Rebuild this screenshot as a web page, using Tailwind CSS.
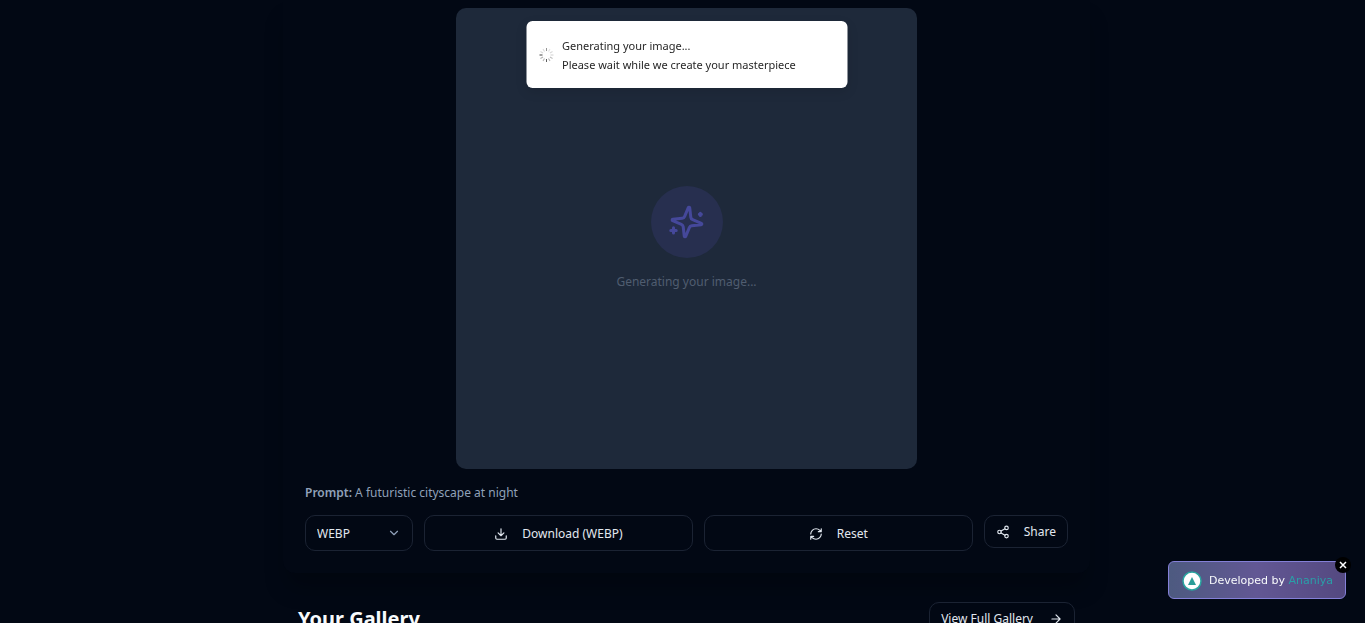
<!DOCTYPE html>
<html lang="en">
<head>
<meta charset="utf-8">
<meta name="viewport" content="width=device-width, initial-scale=1">
<title>Image Generator</title>
<script src="https://cdn.jsdelivr.net/npm/@tailwindcss/browser@4"></script>
</head>
<body class="h-screen overflow-hidden bg-[#020814] pl-2 font-['Noto_Sans',sans-serif] text-[12px] leading-5 text-slate-200">
<main class="mx-auto w-full max-w-[807px]">
  <section class="rounded-b-xl bg-[#020814] px-[22px] pt-2 pb-[22px] shadow-[0_18px_22px_-4px_rgba(0,0,0,0.25)]">
    <div class="mx-auto flex aspect-square w-full max-w-[461px] flex-col items-center justify-center rounded-[10px] bg-[#1e293a]">
      <div class="flex size-[72px] items-center justify-center rounded-full bg-[#272f4f]">
        <svg class="size-9 text-[#45489a]" viewBox="0 0 24 24" fill="none" stroke="currentColor" stroke-width="2" stroke-linecap="round" stroke-linejoin="round" aria-hidden="true"><path transform="rotate(8 12 12)" d="M9.937 15.5A2 2 0 0 0 8.5 14.063l-6.135-1.582a.5.5 0 0 1 0-.962L8.5 9.936A2 2 0 0 0 9.937 8.5l1.582-6.135a.5.5 0 0 1 .963 0L14.063 8.5A2 2 0 0 0 15.5 9.937l6.135 1.581a.5.5 0 0 1 0 .964L15.5 14.063a2 2 0 0 0-1.437 1.437l-1.582 6.135a.5.5 0 0 1-.963 0z"/><path d="M20.900 6.200v1.400M20.200 6.900h1.400M3 15.800v3.600M1.200 17.600h3.600"/></svg>
      </div>
      <p class="mt-[14px] text-[#505d70]">Generating your image...</p>
    </div>
    <p class="mt-[14px] text-slate-400"><span class="font-semibold">Prompt:</span> A futuristic cityscape at night</p>
    <div class="mt-3 flex items-start gap-[11px]">
      <div class="relative w-[108px]">
        <select aria-label="Image format" class="h-9 w-full appearance-none rounded-[10px] border border-[#1b2333] bg-transparent px-[11px] pt-px"><option>WEBP</option></select>
        <svg class="pointer-events-none absolute top-[11px] right-3 size-[14px] text-slate-400" viewBox="0 0 24 24" fill="none" stroke="currentColor" stroke-width="2" stroke-linecap="round" stroke-linejoin="round" aria-hidden="true"><path d="m6 9 6 6 6-6"/></svg>
      </div>
      <button class="flex h-9 flex-1 items-center justify-center gap-[14px] rounded-[10px] border border-[#1b2333] pt-px">
        <svg class="size-[14px]" viewBox="0 0 24 24" fill="none" stroke="currentColor" stroke-width="2" stroke-linecap="round" stroke-linejoin="round" aria-hidden="true"><path d="M21 15v4a2 2 0 0 1-2 2H5a2 2 0 0 1-2-2v-4M7 10l5 5 5-5M12 15V3"/></svg>
        Download (WEBP)
      </button>
      <button class="flex h-9 flex-1 items-center justify-center gap-[14px] rounded-[10px] border border-[#1b2333] pt-px">
        <svg class="size-[14px]" viewBox="0 0 24 24" fill="none" stroke="currentColor" stroke-width="2" stroke-linecap="round" stroke-linejoin="round" aria-hidden="true"><path d="M3 12a9 9 0 0 1 9-9 9.750 9.750 0 0 1 6.740 2.740L21 8M21 3v5h-5M21 12a9 9 0 0 1-9 9 9.750 9.750 0 0 1-6.740-2.740L3 16M8 16H3v5"/></svg>
        Reset
      </button>
      <button class="flex h-[33px] items-center gap-[14px] rounded-[10px] border border-[#1b2333] px-[11px] pt-px">
        <svg class="size-[14px]" viewBox="0 0 24 24" fill="none" stroke="currentColor" stroke-width="2" stroke-linecap="round" stroke-linejoin="round" aria-hidden="true"><circle cx="18" cy="5" r="3"/><circle cx="6" cy="12" r="3"/><circle cx="18" cy="19" r="3"/><path d="m8.590 13.510 6.830 3.980M15.410 6.510l-6.820 3.980"/></svg>
        Share
      </button>
    </div>
  </section>
  <section class="mt-[29px] flex items-start justify-between px-[15px]">
    <h2 class="mt-[3px] text-[20px] leading-7 font-bold text-slate-50">Your Gallery</h2>
    <a href="#gallery" class="flex h-[33px] items-center gap-4 rounded-[10px] border border-[#1b2333] px-[11px]">View Full Gallery
      <svg class="size-[14px]" viewBox="0 0 24 24" fill="none" stroke="currentColor" stroke-width="2" stroke-linecap="round" stroke-linejoin="round" aria-hidden="true"><path d="M5 12h14M12 5l7 7-7 7"/></svg>
    </a>
  </section>
</main>

<div role="status" class="fixed top-[21px] left-1/2 ml-1 flex h-[67px] w-[321px] -translate-x-1/2 items-center gap-2 rounded-md bg-white px-3 text-[11px] leading-[19px] text-[#262626] shadow-[0_4px_12px_rgba(0,0,0,0.1)]">
  <svg class="size-4 text-neutral-700" viewBox="0 0 16 16" stroke="currentColor" stroke-width="1" aria-hidden="true">
    <path d="M8 4V1" opacity=".55"/>
    <path d="M8 4V1" transform="rotate(30 8 8)" opacity=".15"/>
    <path d="M8 4V1" transform="rotate(60 8 8)" opacity=".2"/>
    <path d="M8 4V1" transform="rotate(90 8 8)" opacity=".25"/>
    <path d="M8 4V1" transform="rotate(120 8 8)" opacity=".35"/>
    <path d="M8 4V1" transform="rotate(150 8 8)" opacity=".4"/>
    <path d="M8 4V1" transform="rotate(180 8 8)" opacity=".85"/>
    <path d="M8 4V1" transform="rotate(210 8 8)" opacity=".4"/>
    <path d="M8 4V1" transform="rotate(240 8 8)" opacity=".4"/>
    <path d="M8 4V1" transform="rotate(270 8 8)"/>
    <path d="M8 4V1" transform="rotate(300 8 8)" opacity=".2"/>
    <path d="M8 4V1" transform="rotate(330 8 8)" opacity=".2"/>
  </svg>
  <div><p>Generating your image...</p><p>Please wait while we create your masterpiece</p></div>
</div>

<aside class="fixed right-[19px] bottom-6 flex h-[38px] w-[178px] items-center gap-[7px] rounded-md border border-[#8480d8] bg-linear-to-r from-[#4d5a80] via-[#625794] to-[#544980] px-[13px] pt-px font-['DejaVu_Sans',sans-serif] text-[11px] whitespace-nowrap text-slate-50">
  <svg class="size-5 shrink-0" viewBox="0 0 20 20" aria-hidden="true"><circle cx="10" cy="10" r="9" fill="#fff" stroke="#2aa5a0" stroke-width="1.500"/><path d="M10 6l4 8H6z" fill="#2a9d98"/></svg>
  <span>Developed by <a href="#author" class="text-[#2a9fa8]">Ananiya</a></span>
  <button aria-label="Close" class="absolute -top-[5px] -right-[6px] flex size-4 items-center justify-center rounded-full bg-black text-white">
    <svg class="size-2" viewBox="0 0 8 8" stroke="currentColor" stroke-width="1.500" aria-hidden="true"><path d="M1 1l6 6M7 1L1 7"/></svg>
  </button>
</aside>
</body>
</html>
